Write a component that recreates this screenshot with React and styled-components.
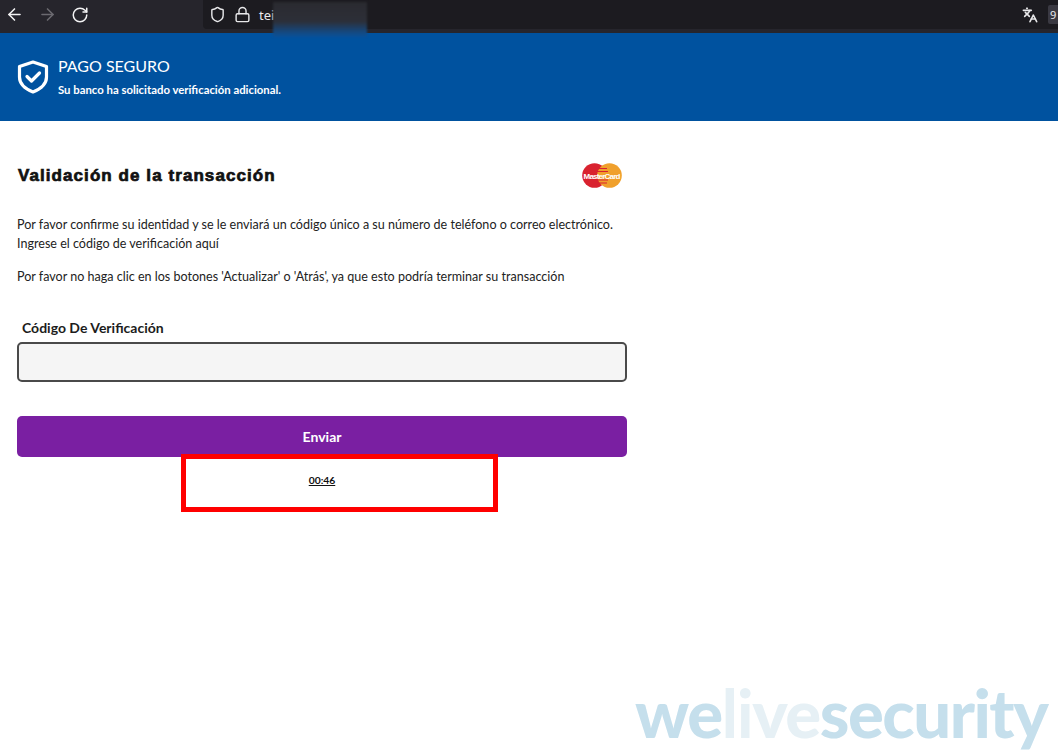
import React from 'react';
import styled, { createGlobalStyle } from 'styled-components';
import { ArrowLeft, ArrowRight, RotateCw, Shield, Lock, Languages } from 'lucide-react';

const GlobalStyle = createGlobalStyle`
  html, body {
    margin: 0;
    padding: 0;
    background: #fff;
    font-family: Lato, "Noto Sans", sans-serif;
    overflow: hidden;
  }
`;

const Page = styled.div`
  position: relative;
  width: 1058px;
  height: 754px;
  overflow: hidden;
`;

const BrowserBar = styled.div`
  height: 33px;
  background: #26252c;
  display: flex;
  align-items: flex-start;
  box-sizing: border-box;
  color: #f3f3f4;
`;

const NavGroup = styled.div`
  display: flex;
  gap: 5px;
  height: 29px;
  align-items: center;
`;

const NavButton = styled.span`
  width: 28px;
  display: flex;
  justify-content: center;
  color: ${(p) => (p.$off ? '#6b6a70' : '#f3f3f4')};
`;

const AddressBar = styled.div`
  margin-left: 109px;
  flex: 1;
  height: 29px;
  background: #1c1b20;
  border-radius: 0 0 0 4px;
  display: flex;
  align-items: center;
  gap: 8px;
  padding-left: 6px;
  box-sizing: border-box;
  font-family: "Noto Sans", sans-serif;
  font-size: 13px;
  color: #e8e8ea;
`;

const RightTools = styled.div`
  margin-left: auto;
  display: flex;
  align-items: center;
  gap: 10px;
`;

const ExtBadge = styled.span`
  width: 10px;
  height: 19px;
  background: #3a3942;
  border-radius: 2px 0 0 2px;
  font-size: 11px;
  line-height: 19px;
  padding-left: 2px;
  box-sizing: border-box;
  overflow: hidden;
`;

const Redaction = styled.div`
  position: absolute;
  left: 273px;
  top: 2px;
  width: 94px;
  height: 35px;
  background: linear-gradient(180deg, #2a2a30 0%, #2d2f38 55%, #134a84 88%, #0a5199 100%);
  filter: blur(1px);
`;

const Banner = styled.header`
  height: 88px;
  background: #00529f;
  display: flex;
  align-items: center;
  padding-left: 17px;
  gap: 9px;
  box-sizing: border-box;
  color: #fff;
`;

const BannerText = styled.div`
  display: flex;
  flex-direction: column;
  padding-bottom: 2px;
`;

const BannerTitle = styled.div`
  font-size: 16px;
  line-height: 22px;
`;

const BannerSub = styled.div`
  font-size: 11.35px;
  line-height: 16px;
  font-weight: 700;
  margin-top: 5px;
`;

const Main = styled.main`
  width: 610px;
  margin-left: 17px;
`;

const TitleRow = styled.div`
  display: flex;
  align-items: center;
  justify-content: space-between;
  height: 28px;
  margin-top: 40px;
  padding-right: 5px;
`;

const Title = styled.h1`
  margin: 2px 0 0 1px;
  font-family: "Liberation Sans", Arial, sans-serif;
  font-size: 17px;
  font-weight: 700;
  letter-spacing: 1.07px;
  color: #111;
  -webkit-text-stroke: 0.7px #111;
`;

const Para = styled.p`
  margin: ${(p) => p.$top}px 0 0;
  font-size: 12.55px;
  line-height: 18.5px;
  color: #222;
  white-space: nowrap;
`;

const Label = styled.label`
  display: block;
  margin: 31px 0 0 5px;
  font-size: 14px;
  line-height: 20px;
  font-weight: 700;
  color: #1c1c1c;
`;

const CodeInput = styled.div`
  height: 40px;
  margin-top: 4px;
  background: #f5f5f5;
  border: 2px solid #4a4a4a;
  border-radius: 5px;
  box-sizing: border-box;
`;

const SubmitButton = styled.button`
  display: block;
  width: 100%;
  height: 41px;
  margin-top: 34px;
  border: none;
  border-radius: 5px;
  background: #7a1fa2;
  color: #fff;
  font-family: inherit;
  font-size: 14px;
  font-weight: 700;
`;

const Timer = styled.div`
  text-align: center;
  margin-top: 15px;
  font-size: 10.3px;
  line-height: 16px;
  font-weight: 700;
  color: #111;
  text-decoration: underline;
`;

const RedBox = styled.div`
  position: absolute;
  left: 181px;
  top: 454px;
  width: 317px;
  height: 58px;
  border: 5px solid #ff0000;
  box-sizing: border-box;
`;

const Watermark = styled.div`
  position: absolute;
  left: 635px;
  top: 674px;
  font-family: Lato, "Open Sans", sans-serif;
  font-size: 67px;
  line-height: 76px;
  font-weight: 900;
  letter-spacing: -1.5px;
  color: #c5dfec;
  white-space: nowrap;
`;

const Light = styled.span`
  color: #e6f0f5;
  font-weight: ${(p) => (p.$thin ? 700 : 900)};
`;

const ShieldMark = () => (
  <svg width="32" height="34" viewBox="0 0 32 34" fill="none">
    <path d="M16 2 L29.500 6.500 V17 C29.500 24 23.500 29 16 32 C8.500 29 2.500 24 2.500 17 V6.500 Z" stroke="#fff" strokeWidth="3.2" strokeLinejoin="round" />
    <path d="M10 16.500 L14.500 21 L22.500 13" stroke="#fff" strokeWidth="3.2" strokeLinecap="round" strokeLinejoin="round" />
  </svg>
);

const CardLogo = () => (
  <svg width="40" height="25" viewBox="0 0 40 25">
    <circle cx="12.500" cy="12.500" r="12.300" fill="#d9222f" />
    <circle cx="27.500" cy="12.500" r="12.300" fill="#f0a02c" />
    <path d="M15 5.500H25M14 8.500H26M14 17H26M15 20H25" stroke="#d9222f" strokeWidth="1.2" />
    <text x="20" y="15.500" textAnchor="middle" fontFamily="Liberation Sans, sans-serif" fontSize="8" fontWeight="700" fill="#fff" textLength="37">MasterCard</text>
  </svg>
);

const App = () => (
  <Page>
    <GlobalStyle />
    <BrowserBar>
      <NavGroup>
        <NavButton><ArrowLeft size={19} /></NavButton>
        <NavButton $off><ArrowRight size={19} /></NavButton>
        <NavButton><RotateCw size={18} /></NavButton>
      </NavGroup>
      <AddressBar>
        <Shield size={17} />
        <Lock size={17} />
        <span>tei</span>
        <RightTools>
          <Languages size={16} strokeWidth={2.4} />
          <ExtBadge>9</ExtBadge>
        </RightTools>
      </AddressBar>
    </BrowserBar>
    <Redaction />
    <Banner>
      <ShieldMark />
      <BannerText>
        <BannerTitle>PAGO SEGURO</BannerTitle>
        <BannerSub>Su banco ha solicitado verificación adicional.</BannerSub>
      </BannerText>
    </Banner>
    <Main>
      <TitleRow>
        <Title>Validación de la transacción</Title>
        <CardLogo />
      </TitleRow>
      <Para $top={27}>
        Por favor confirme su identidad y se le enviará un código único a su número de teléfono o correo electrónico.
        <br />
        Ingrese el código de verificación aquí
      </Para>
      <Para $top={15}>Por favor no haga clic en los botones 'Actualizar' o 'Atrás', ya que esto podría terminar su transacción</Para>
      <Label>Código De Verificación</Label>
      <CodeInput />
      <SubmitButton>Enviar</SubmitButton>
      <Timer>00:46</Timer>
    </Main>
    <RedBox />
    <Watermark>
      we<Light $thin>li</Light><Light>ve</Light>security
    </Watermark>
  </Page>
);

export default App;
